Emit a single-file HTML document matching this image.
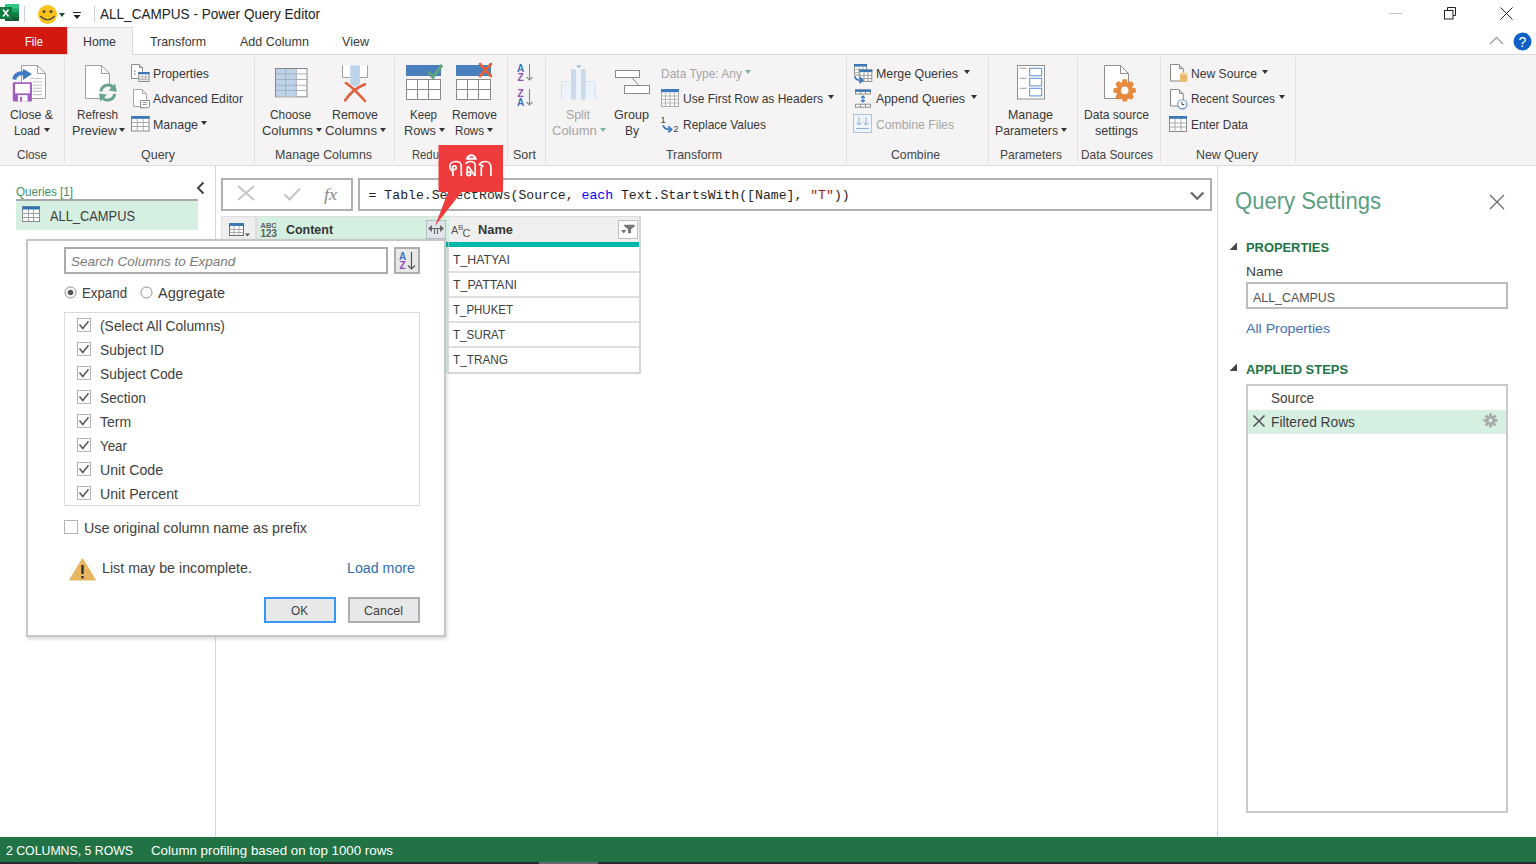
<!DOCTYPE html>
<html><head><meta charset="utf-8"><title>ALL_CAMPUS - Power Query Editor</title>
<style>
html,body{margin:0;padding:0;}
body{width:1536px;height:864px;position:relative;overflow:hidden;background:#fff;font-family:"Liberation Sans",sans-serif;}
.t{position:absolute;white-space:pre;transform-origin:0 0;}
.r{position:absolute;}
svg.r{overflow:visible;}
</style></head>
<body>
<div class="r" style="left:0px;top:0px;width:1536px;height:27px;background:#ffffff;"></div>
<div class="r" style="left:0px;top:27px;width:1536px;height:28px;background:#ffffff;"></div>
<div class="r" style="left:0px;top:54px;width:1536px;height:1px;background:#dadada;"></div>
<div class="r" style="left:0px;top:55px;width:1536px;height:110px;background:#f5f3f4;"></div>
<div class="r" style="left:0px;top:165px;width:1536px;height:1px;background:#dcdcdc;"></div>
<div class="r" style="left:0px;top:166px;width:1536px;height:671px;background:#ffffff;"></div>
<div class="r" style="left:0px;top:837px;width:1536px;height:25px;background:#217346;"></div>
<div class="r" style="left:0px;top:862px;width:1536px;height:2px;background:#2b2b2b;"></div>
<div class="r" style="left:539px;top:862px;width:59px;height:2px;background:#6a6a6a;"></div>
<svg class="r" style="left:0px;top:4px" width="20" height="18" viewBox="0 0 20 18"><rect x="5" y="0" width="14" height="17" fill="#21a366"/><rect x="5" y="0" width="14" height="4.5" fill="#33c481"/><rect x="5" y="8.5" width="14" height="4.5" fill="#107c41"/><rect x="5" y="13" width="14" height="4" fill="#185c37"/><rect x="0" y="3" width="12" height="12" fill="#107c41"/><path d="M3 5.5L8.5 12.5M8.5 5.5L3 12.5" stroke="#fff" stroke-width="1.6"/></svg>
<div class="r" style="left:24px;top:6px;width:1px;height:16px;background:#c8d0cc;"></div>
<svg class="r" style="left:37px;top:4px" width="21" height="21" viewBox="0 0 21 21"><circle cx="10.5" cy="10.5" r="9.5" fill="#fcc419"/><circle cx="7" cy="7.5" r="1.5" fill="#4b4b4b"/><circle cx="14" cy="7.5" r="1.5" fill="#4b4b4b"/><path d="M3.3 12 Q10.5 19.5 17.7 12" stroke="#4b4b4b" stroke-width="1.2" fill="none"/></svg>
<svg class="r" style="left:59px;top:13px" width="6" height="4" viewBox="0 0 6 4"><path d="M0 0H6L3 4Z" fill="#1f4d3a"/></svg>
<svg class="r" style="left:73px;top:12px" width="8" height="8" viewBox="0 0 8 8"><rect x="0" y="0" width="8" height="1" fill="#222"/><path d="M0.5 3H7.5L4 7Z" fill="#222"/></svg>
<div class="r" style="left:94px;top:6px;width:1px;height:16px;background:#c8d0cc;"></div>
<div class="t" style="left:100.00px;top:6.73px;font-size:14.5px;line-height:14.5px;color:#222;font-family:'Liberation Sans', sans-serif;transform:scaleX(0.9348);">ALL_CAMPUS - Power Query Editor</div>
<div class="r" style="left:1389px;top:13px;width:13px;height:1px;background:#c4c4c4;"></div>
<svg class="r" style="left:1444px;top:7px" width="13" height="13" viewBox="0 0 13 13"><rect x="0.5" y="3.5" width="8.5" height="8.5" fill="none" stroke="#222"/><path d="M3.5 3.5V0.5H11.5V8.5H9" fill="none" stroke="#222"/></svg>
<svg class="r" style="left:1500px;top:7px" width="13" height="13" viewBox="0 0 13 13"><path d="M0.5 0.5L12.5 12.5M12.5 0.5L0.5 12.5" stroke="#222" stroke-width="1"/></svg>
<div class="r" style="left:0px;top:27px;width:67px;height:27px;background:#d2190f;"></div>
<div class="t" style="left:25.00px;top:35.00px;font-size:13px;line-height:13px;color:#ffffff;font-family:'Liberation Sans', sans-serif;transform:scaleX(0.8600);">File</div>
<div class="r" style="left:67px;top:27px;width:66px;height:28px;background:#f5f3f4;border:1px solid #dadada;box-sizing:border-box;border-bottom:none;"></div>
<div class="t" style="left:83.00px;top:35.00px;font-size:13px;line-height:13px;color:#383838;font-family:'Liberation Sans', sans-serif;transform:scaleX(0.9507);">Home</div>
<div class="t" style="left:150.00px;top:35.00px;font-size:13px;line-height:13px;color:#383838;font-family:'Liberation Sans', sans-serif;transform:scaleX(0.9530);">Transform</div>
<div class="t" style="left:240.00px;top:35.00px;font-size:13px;line-height:13px;color:#383838;font-family:'Liberation Sans', sans-serif;transform:scaleX(0.9642);">Add Column</div>
<div class="t" style="left:342.00px;top:35.00px;font-size:13px;line-height:13px;color:#383838;font-family:'Liberation Sans', sans-serif;transform:scaleX(0.9660);">View</div>
<svg class="r" style="left:1489px;top:36px" width="15" height="9" viewBox="0 0 15 9"><path d="M1 8L7.5 1.5L14 8" fill="none" stroke="#a0a0a0" stroke-width="1.3"/></svg>
<svg class="r" style="left:1513px;top:32px" width="19" height="19" viewBox="0 0 19 19"><circle cx="9.5" cy="9.5" r="9" fill="#0f5fc6"/><text x="9.5" y="15" font-family="Liberation Sans" font-size="14" fill="#fff" text-anchor="middle">?</text></svg>
<div class="r" style="left:64px;top:57px;width:1px;height:105px;background:#e1dfdf;"></div>
<div class="r" style="left:254px;top:57px;width:1px;height:105px;background:#e1dfdf;"></div>
<div class="r" style="left:394px;top:57px;width:1px;height:105px;background:#e1dfdf;"></div>
<div class="r" style="left:507px;top:57px;width:1px;height:105px;background:#e1dfdf;"></div>
<div class="r" style="left:545px;top:57px;width:1px;height:105px;background:#e1dfdf;"></div>
<div class="r" style="left:846px;top:57px;width:1px;height:105px;background:#e1dfdf;"></div>
<div class="r" style="left:988px;top:57px;width:1px;height:105px;background:#e1dfdf;"></div>
<div class="r" style="left:1077px;top:57px;width:1px;height:105px;background:#e1dfdf;"></div>
<div class="r" style="left:1160px;top:57px;width:1px;height:105px;background:#e1dfdf;"></div>
<div class="r" style="left:1295px;top:57px;width:1px;height:105px;background:#e1dfdf;"></div>
<div class="t" style="left:17.00px;top:148.00px;font-size:13px;line-height:13px;color:#444444;font-family:'Liberation Sans', sans-serif;transform:scaleX(0.9032);">Close</div>
<div class="t" style="left:141.00px;top:148.00px;font-size:13px;line-height:13px;color:#444444;font-family:'Liberation Sans', sans-serif;transform:scaleX(0.9598);">Query</div>
<div class="t" style="left:275.00px;top:148.00px;font-size:13px;line-height:13px;color:#444444;font-family:'Liberation Sans', sans-serif;transform:scaleX(0.9517);">Manage Columns</div>
<div class="t" style="left:412.00px;top:148.00px;font-size:13px;line-height:13px;color:#444444;font-family:'Liberation Sans', sans-serif;transform:scaleX(0.8650);">Reduce Rows</div>
<div class="t" style="left:513.00px;top:148.00px;font-size:13px;line-height:13px;color:#444444;font-family:'Liberation Sans', sans-serif;transform:scaleX(0.9642);">Sort</div>
<div class="t" style="left:666.00px;top:148.00px;font-size:13px;line-height:13px;color:#444444;font-family:'Liberation Sans', sans-serif;transform:scaleX(0.9530);">Transform</div>
<div class="t" style="left:891.00px;top:148.00px;font-size:13px;line-height:13px;color:#444444;font-family:'Liberation Sans', sans-serif;transform:scaleX(0.9423);">Combine</div>
<div class="t" style="left:1000.00px;top:148.00px;font-size:13px;line-height:13px;color:#444444;font-family:'Liberation Sans', sans-serif;transform:scaleX(0.9225);">Parameters</div>
<div class="t" style="left:1081.00px;top:148.00px;font-size:13px;line-height:13px;color:#444444;font-family:'Liberation Sans', sans-serif;transform:scaleX(0.9139);">Data Sources</div>
<div class="t" style="left:1196.00px;top:148.00px;font-size:13px;line-height:13px;color:#444444;font-family:'Liberation Sans', sans-serif;transform:scaleX(0.9538);">New Query</div>
<svg class="r" style="left:8px;top:60px" width="44" height="44" viewBox="0 0 44 44"><path d="M13.5 5.5H29.5L37.5 13.5V38.5H13.5Z" fill="#fff" stroke="#a0a0a0"/><path d="M29.5 5.5V13.5H37.5" fill="none" stroke="#a0a0a0"/><path d="M22 18.5H34M25 22H34M25 25.2H34M25 28.3H34M25 31.4H34M25 34.6H34" stroke="#c4c4c4" stroke-width="1.1"/><path d="M6.3 19.5C6.8 15 10 13 15.3 13.2" fill="none" stroke="#3f7cc4" stroke-width="4"/><path d="M15 8.7L24 14L15 20Z" fill="#3f7cc4"/><rect x="4.8" y="22.2" width="19.1" height="19.3" rx="1" fill="#a05bbf"/><rect x="7.1" y="23.9" width="14.8" height="9.5" fill="#fff"/><rect x="9.9" y="35.1" width="9.7" height="6.4" fill="#fff"/><rect x="12.2" y="36.8" width="1.9" height="4.7" fill="#a05bbf"/></svg>
<div class="t" style="left:10.00px;top:108.00px;font-size:13px;line-height:13px;color:#383838;font-family:'Liberation Sans', sans-serif;transform:scaleX(0.9451);">Close &amp;</div>
<div class="t" style="left:14.00px;top:124.00px;font-size:13px;line-height:13px;color:#383838;font-family:'Liberation Sans', sans-serif;transform:scaleX(0.8989);">Load</div>
<svg class="r" style="left:44px;top:128px" width="6" height="4" viewBox="0 0 6 4"><path d="M0 0H6L3.0 4Z" fill="#333"/></svg>
<svg class="r" style="left:80px;top:60px" width="44" height="44" viewBox="0 0 44 44"><path d="M5.5 5.5H21.5L29.5 13.5V38.5H5.5Z" fill="#fff" stroke="#a0a0a0"/><path d="M21.5 5.5V13.5H29.5" fill="none" stroke="#a0a0a0"/><circle cx="27.8" cy="32.6" r="9.5" fill="#f5f3f4"/><path d="M21 31.5A7 7 0 0 1 33.5 27.8" fill="none" stroke="#66a58a" stroke-width="3"/><path d="M35 23.5L36.8 31.8L28.8 30.4Z" fill="#66a58a"/><path d="M34.6 33.8A7 7 0 0 1 22.3 37.6" fill="none" stroke="#66a58a" stroke-width="3"/><path d="M19.1 33.4L27 34.8L20.3 41.5Z" fill="#66a58a"/></svg>
<div class="t" style="left:77.00px;top:108.00px;font-size:13px;line-height:13px;color:#383838;font-family:'Liberation Sans', sans-serif;transform:scaleX(0.9011);">Refresh</div>
<div class="t" style="left:72.00px;top:124.00px;font-size:13px;line-height:13px;color:#383838;font-family:'Liberation Sans', sans-serif;transform:scaleX(0.9723);">Preview</div>
<svg class="r" style="left:119px;top:128px" width="6" height="4" viewBox="0 0 6 4"><path d="M0 0H6L3.0 4Z" fill="#333"/></svg>
<svg class="r" style="left:131px;top:64px" width="19" height="18" viewBox="0 0 19 18"><path d="M0.5 0.5H8L11.5 4V14.5H0.5Z" fill="#fff" stroke="#8a8a8a"/><path d="M8.5 0.5V3.5H11.5" fill="none" stroke="#8a8a8a"/><rect x="3" y="6.5" width="1.5" height="1.3" fill="#888"/><rect x="3" y="9.5" width="1.5" height="1.3" fill="#888"/><rect x="7.8" y="8.5" width="10.2" height="9" fill="#fff" stroke="#8a8a8a"/><rect x="7.3" y="8" width="11.2" height="2.3" fill="#3c78b5"/><path d="M7.8 13H18M7.8 15.3H18M11.3 10.3V17.5M14.6 10.3V17.5" stroke="#a8a8a8" stroke-width="0.9"/></svg>
<div class="t" style="left:153.00px;top:67.00px;font-size:13px;line-height:13px;color:#383838;font-family:'Liberation Sans', sans-serif;transform:scaleX(0.9447);">Properties</div>
<svg class="r" style="left:133px;top:89px" width="18" height="20" viewBox="0 0 18 20"><path d="M0.5 0.5H9L13.5 5V17.5H0.5Z" fill="#fff" stroke="#a8a8a8"/><path d="M9.5 0.5V4.5H13.5" fill="none" stroke="#a8a8a8"/><path d="M7.5 11.5H16.5V17.5C16.5 18.3 15.8 18.8 15 18.8H7.5Z" fill="#fff" stroke="#8a8a8a"/><path d="M9.5 13.5H14M9.5 15.5H14M7.5 18.5H12" stroke="#9a9a9a"/></svg>
<div class="t" style="left:153.00px;top:92.00px;font-size:13px;line-height:13px;color:#383838;font-family:'Liberation Sans', sans-serif;transform:scaleX(0.9432);">Advanced Editor</div>
<svg class="r" style="left:131px;top:116px" width="19" height="16" viewBox="0 0 19 16"><rect x="0.5" y="0.5" width="17.5" height="14.5" fill="#fff" stroke="#8a8a8a"/><rect x="0" y="0" width="18.5" height="2.8" fill="#3c78b5"/><path d="M0.5 6.5H18M0.5 10.5H18M6.3 2.8V15M12.2 2.8V15" stroke="#a8a8a8"/></svg>
<div class="t" style="left:153.00px;top:118.00px;font-size:13px;line-height:13px;color:#383838;font-family:'Liberation Sans', sans-serif;transform:scaleX(0.9575);">Manage</div>
<svg class="r" style="left:201px;top:121px" width="6" height="4" viewBox="0 0 6 4"><path d="M0 0H6L3.0 4Z" fill="#333"/></svg>
<svg class="r" style="left:275px;top:68px" width="33" height="30" viewBox="0 0 33 30"><rect x="0.5" y="0.5" width="31.5" height="28.3" fill="#fff" stroke="#858585"/><rect x="1" y="1" width="20.5" height="27.5" fill="#bdd3ea"/><path d="M1 5.9H31.5M1 11.5H31.5M1 17.3H31.5M1 22.5H31.5M10.7 1V28.5M21.3 1V28.5" stroke="#aab0b8"/></svg>
<div class="t" style="left:270.00px;top:108.00px;font-size:13px;line-height:13px;color:#383838;font-family:'Liberation Sans', sans-serif;transform:scaleX(0.9155);">Choose</div>
<div class="t" style="left:262.00px;top:124.00px;font-size:13px;line-height:13px;color:#383838;font-family:'Liberation Sans', sans-serif;transform:scaleX(0.9944);">Columns</div>
<svg class="r" style="left:316px;top:128px" width="6" height="4" viewBox="0 0 6 4"><path d="M0 0H6L3.0 4Z" fill="#333"/></svg>
<svg class="r" style="left:341px;top:65px" width="28" height="38" viewBox="0 0 28 38"><path d="M1.5 0.5V12.5H9M19 12.5H26.5V0.5" fill="none" stroke="#a0a0a0"/><rect x="2" y="0.5" width="7" height="11.5" fill="#fff"/><rect x="19" y="0.5" width="7" height="11.5" fill="#fff"/><path d="M9.3 0.5H18.9V19L14.1 22L9.3 19Z" fill="#bdd3ea"/><path d="M4.9 18.2C10 21 15 26 24 36" fill="none" stroke="#e0603c" stroke-width="2.6" stroke-linecap="round"/><path d="M24 19.3C17 22 9 28 4.2 35.3" fill="none" stroke="#e0603c" stroke-width="2.6" stroke-linecap="round"/></svg>
<div class="t" style="left:332.00px;top:108.00px;font-size:13px;line-height:13px;color:#383838;font-family:'Liberation Sans', sans-serif;transform:scaleX(0.9499);">Remove</div>
<div class="t" style="left:325.00px;top:124.00px;font-size:13px;line-height:13px;color:#383838;font-family:'Liberation Sans', sans-serif;transform:scaleX(1.0139);">Columns</div>
<svg class="r" style="left:380px;top:128px" width="6" height="4" viewBox="0 0 6 4"><path d="M0 0H6L3.0 4Z" fill="#333"/></svg>
<svg class="r" style="left:405px;top:63px" width="38" height="38" viewBox="0 0 38 38"><rect x="1" y="2" width="35" height="11" fill="#4a7fbd"/><rect x="1.5" y="16.5" width="34" height="20" fill="#fff" stroke="#8a8a8a"/><path d="M1.5 26.5H35.5M12.5 16.5V36.5M23.5 16.5V36.5" stroke="#8a8a8a"/><path d="M23 9 L28 14 L37 2" fill="none" stroke="#5ea07f" stroke-width="3.2"/></svg>
<div class="t" style="left:410.00px;top:108.00px;font-size:13px;line-height:13px;color:#383838;font-family:'Liberation Sans', sans-serif;transform:scaleX(0.8895);">Keep</div>
<div class="t" style="left:404.00px;top:124.00px;font-size:13px;line-height:13px;color:#383838;font-family:'Liberation Sans', sans-serif;transform:scaleX(0.9846);">Rows</div>
<svg class="r" style="left:439px;top:128px" width="6" height="4" viewBox="0 0 6 4"><path d="M0 0H6L3.0 4Z" fill="#333"/></svg>
<svg class="r" style="left:455px;top:63px" width="38" height="38" viewBox="0 0 38 38"><rect x="1" y="2" width="35" height="11" fill="#4a7fbd"/><rect x="1.5" y="16.5" width="34" height="20" fill="#fff" stroke="#8a8a8a"/><path d="M1.5 26.5H35.5M12.5 16.5V36.5M23.5 16.5V36.5" stroke="#8a8a8a"/><path d="M25 1 L36 13 M36 1 L25 13" stroke="#e0623a" stroke-width="2.8" stroke-linecap="round"/></svg>
<div class="t" style="left:452.00px;top:108.00px;font-size:13px;line-height:13px;color:#383838;font-family:'Liberation Sans', sans-serif;transform:scaleX(0.9293);">Remove</div>
<div class="t" style="left:455.00px;top:124.00px;font-size:13px;line-height:13px;color:#383838;font-family:'Liberation Sans', sans-serif;transform:scaleX(0.8923);">Rows</div>
<svg class="r" style="left:487px;top:128px" width="6" height="4" viewBox="0 0 6 4"><path d="M0 0H6L3.0 4Z" fill="#333"/></svg>
<svg class="r" style="left:517px;top:63px" width="17" height="20" viewBox="0 0 17 20"><text x="0" y="9" font-family="Liberation Sans" font-weight="700" font-size="10" fill="#3a73c0">A</text><text x="0.5" y="18" font-family="Liberation Sans" font-weight="700" font-size="10" fill="#8e4fb5">Z</text><path d="M12.5 1V17M9.5 14L12.5 17L15.5 14" fill="none" stroke="#8a8a8a" stroke-width="1.1"/></svg>
<svg class="r" style="left:517px;top:88px" width="17" height="20" viewBox="0 0 17 20"><text x="0.5" y="9" font-family="Liberation Sans" font-weight="700" font-size="10" fill="#8e4fb5">Z</text><text x="0" y="18" font-family="Liberation Sans" font-weight="700" font-size="10" fill="#3a73c0">A</text><path d="M12.5 1V17M9.5 14L12.5 17L15.5 14" fill="none" stroke="#8a8a8a" stroke-width="1.1"/></svg>
<svg class="r" style="left:560px;top:64px" width="37" height="37" viewBox="0 0 37 37"><path d="M1.8 35.5V17.9H11M25.7 17.9H35V35.5" fill="#ecf3fb" stroke="#c9d8ea"/><rect x="2" y="18" width="9" height="17.5" fill="#ecf3fb"/><rect x="25.7" y="18" width="9" height="17.5" fill="#ecf3fb"/><rect x="16" y="5" width="4.7" height="30.5" fill="#ecf3fb"/><rect x="11" y="5" width="5" height="30.5" fill="#cbd9ea"/><rect x="21" y="5" width="4.7" height="30.5" fill="#cbd9ea"/><path d="M16 1.5H21.5L18.75 4.3Z" fill="#9fb5cf"/></svg>
<div class="t" style="left:566.00px;top:108.00px;font-size:13px;line-height:13px;color:#a6a6a6;font-family:'Liberation Sans', sans-serif;transform:scaleX(0.9492);">Split</div>
<div class="t" style="left:552.00px;top:124.00px;font-size:13px;line-height:13px;color:#a6a6a6;font-family:'Liberation Sans', sans-serif;">Column</div>
<svg class="r" style="left:600px;top:128px" width="6" height="4" viewBox="0 0 6 4"><path d="M0 0H6L3.0 4Z" fill="#7fb59b"/></svg>
<svg class="r" style="left:615px;top:70px" width="36" height="26" viewBox="0 0 36 26"><rect x="0.5" y="0.5" width="24" height="7" fill="#fff" stroke="#8a8a8a"/><rect x="9.5" y="15.5" width="25" height="8" fill="#fff" stroke="#8a8a8a"/><path d="M17 7.5L24 15.5" stroke="#8a8a8a"/></svg>
<div class="t" style="left:614.00px;top:108.00px;font-size:13px;line-height:13px;color:#383838;font-family:'Liberation Sans', sans-serif;transform:scaleX(0.9685);">Group</div>
<div class="t" style="left:625.00px;top:124.00px;font-size:13px;line-height:13px;color:#383838;font-family:'Liberation Sans', sans-serif;transform:scaleX(0.9244);">By</div>
<div class="t" style="left:661.00px;top:67.00px;font-size:13px;line-height:13px;color:#a6a6a6;font-family:'Liberation Sans', sans-serif;transform:scaleX(0.9210);">Data Type: Any</div>
<svg class="r" style="left:745px;top:70px" width="6" height="4" viewBox="0 0 6 4"><path d="M0 0H6L3.0 4Z" fill="#7fb59b"/></svg>
<svg class="r" style="left:661px;top:89px" width="19" height="19" viewBox="0 0 19 19"><rect x="0.5" y="0.5" width="17" height="17" fill="#fff" stroke="#a8a8a8"/><rect x="0" y="0" width="18" height="3.2" fill="#3c7bc0"/><path d="M0.5 7H17.5M0.5 10.5H17.5M0.5 14H17.5M4.5 3.2V17.5M9 3.2V17.5M13.5 3.2V17.5" stroke="#b8b8b8" stroke-width="1.2"/></svg>
<div class="t" style="left:683.00px;top:92.00px;font-size:13px;line-height:13px;color:#383838;font-family:'Liberation Sans', sans-serif;transform:scaleX(0.9228);">Use First Row as Headers</div>
<svg class="r" style="left:828px;top:95px" width="6" height="4" viewBox="0 0 6 4"><path d="M0 0H6L3.0 4Z" fill="#333"/></svg>
<svg class="r" style="left:660px;top:114px" width="22" height="20" viewBox="0 0 22 20"><text x="0.6" y="8.8" font-family="Liberation Sans" font-size="9.5" fill="#444">1</text><text x="13.2" y="17.6" font-family="Liberation Sans" font-size="9.5" fill="#444">2</text><path d="M3.2 11.2C3.6 14.5 6 15.6 10.5 15.4" fill="none" stroke="#3a78c0" stroke-width="1.8"/><path d="M8.3 12.3L11.6 15.4L8.3 18.2" fill="none" stroke="#3a78c0" stroke-width="1.8"/></svg>
<div class="t" style="left:683.00px;top:118.00px;font-size:13px;line-height:13px;color:#383838;font-family:'Liberation Sans', sans-serif;transform:scaleX(0.9213);">Replace Values</div>
<svg class="r" style="left:853px;top:63px" width="21" height="21" viewBox="0 0 21 21"><rect x="1.5" y="1.5" width="12" height="10.5" fill="#fff" stroke="#8f8f8f"/><rect x="1" y="1" width="13" height="2.6" fill="#3c78b5"/><path d="M1.5 6.5H13.5M1.5 9.5H13.5M6 3.5V12M10 3.5V12" stroke="#b0b0b0"/><rect x="6.8" y="7" width="12" height="11.5" fill="#fff" stroke="#8f8f8f"/><rect x="6.3" y="6.5" width="13" height="2.6" fill="#3c78b5"/><path d="M6.8 12.5H18.8M6.8 15.5H18.8M11 9V18.5M15 9V18.5" stroke="#a0a0a0"/><path d="M1.8 13.3C2 16.8 4.5 17.4 8.5 17.2" fill="none" stroke="#3c78c0" stroke-width="1.8"/><path d="M6.5 14.2L9.6 17.2L6.5 20" fill="none" stroke="#3c78c0" stroke-width="1.8"/></svg>
<div class="t" style="left:876.00px;top:67.00px;font-size:13px;line-height:13px;color:#383838;font-family:'Liberation Sans', sans-serif;transform:scaleX(0.9535);">Merge Queries</div>
<svg class="r" style="left:964px;top:70px" width="6" height="4" viewBox="0 0 6 4"><path d="M0 0H6L3.0 4Z" fill="#333"/></svg>
<svg class="r" style="left:854px;top:89px" width="18" height="19" viewBox="0 0 18 19"><rect x="1.5" y="1" width="15" height="4" fill="#fff" stroke="#8f8f8f"/><rect x="1" y="0.5" width="16" height="2.4" fill="#3c78b5"/><path d="M6.5 3V5M11.5 3V5" stroke="#8f8f8f"/><path d="M8.9 7V13M7 8.8L8.9 7L10.8 8.8M7 11.2L8.9 13L10.8 11.2" fill="none" stroke="#3c78c0" stroke-width="1.2"/><rect x="1.5" y="15.2" width="15" height="3" fill="#fff" stroke="#8f8f8f"/><path d="M6.5 15.2V18.2M11.5 15.2V18.2" stroke="#8f8f8f"/></svg>
<div class="t" style="left:876.00px;top:92.00px;font-size:13px;line-height:13px;color:#383838;font-family:'Liberation Sans', sans-serif;transform:scaleX(0.9476);">Append Queries</div>
<svg class="r" style="left:971px;top:95px" width="6" height="4" viewBox="0 0 6 4"><path d="M0 0H6L3.0 4Z" fill="#333"/></svg>
<svg class="r" style="left:853px;top:114px" width="20" height="20" viewBox="0 0 20 20"><rect x="0.5" y="0.5" width="18" height="18" fill="#eef4fb" stroke="#a9c3e0"/><path d="M6 3V11M3.5 8.5L6 11L8.5 8.5M13 3V11M10.5 8.5L13 11L15.5 8.5M3 14.5H16" fill="none" stroke="#8fb0d6"/></svg>
<div class="t" style="left:876.00px;top:118.00px;font-size:13px;line-height:13px;color:#a6a6a6;font-family:'Liberation Sans', sans-serif;transform:scaleX(0.9390);">Combine Files</div>
<svg class="r" style="left:1017px;top:65px" width="29" height="36" viewBox="0 0 29 36"><rect x="0.5" y="0.5" width="27" height="33.5" fill="#fff" stroke="#8f8f8f"/><path d="M2.5 3.3H9.5M2.5 13.3H9.5M2.5 23.3H9.5" stroke="#a0a0a0"/><rect x="12.7" y="3.3" width="12" height="7.5" fill="#fff" stroke="#5a8fcf"/><rect x="12.7" y="13.3" width="12" height="7.6" fill="#fff" stroke="#5a8fcf"/><rect x="12.7" y="23.3" width="12" height="7.6" fill="#fff" stroke="#5a8fcf"/></svg>
<div class="t" style="left:1008.00px;top:108.00px;font-size:13px;line-height:13px;color:#383838;font-family:'Liberation Sans', sans-serif;transform:scaleX(0.9575);">Manage</div>
<div class="t" style="left:995.00px;top:124.00px;font-size:13px;line-height:13px;color:#383838;font-family:'Liberation Sans', sans-serif;transform:scaleX(0.9374);">Parameters</div>
<svg class="r" style="left:1061px;top:128px" width="6" height="4" viewBox="0 0 6 4"><path d="M0 0H6L3.0 4Z" fill="#333"/></svg>
<svg class="r" style="left:1103px;top:64px" width="35" height="38" viewBox="0 0 35 38"><path d="M1.5 1.5H17.5L25.5 9.5V34.5H1.5Z" fill="#fff" stroke="#8f8f8f"/><path d="M17.5 1.5V9.5H25.5" fill="none" stroke="#8f8f8f"/><g transform="translate(21.7 26.4)"><circle r="8" fill="#e8893c"/><path d="M6.50 -3.20L11.20 -2.00L11.20 2.00L6.50 3.20Z" fill="#e8893c"/><path d="M6.86 2.33L9.33 6.51L6.51 9.33L2.33 6.86Z" fill="#e8893c"/><path d="M3.20 6.50L2.00 11.20L-2.00 11.20L-3.20 6.50Z" fill="#e8893c"/><path d="M-2.33 6.86L-6.51 9.33L-9.33 6.51L-6.86 2.33Z" fill="#e8893c"/><path d="M-6.50 3.20L-11.20 2.00L-11.20 -2.00L-6.50 -3.20Z" fill="#e8893c"/><path d="M-6.86 -2.33L-9.33 -6.51L-6.51 -9.33L-2.33 -6.86Z" fill="#e8893c"/><path d="M-3.20 -6.50L-2.00 -11.20L2.00 -11.20L3.20 -6.50Z" fill="#e8893c"/><path d="M2.33 -6.86L6.51 -9.33L9.33 -6.51L6.86 -2.33Z" fill="#e8893c"/><circle r="3.8" fill="#fff"/></g></svg>
<div class="t" style="left:1084.00px;top:108.00px;font-size:13px;line-height:13px;color:#383838;font-family:'Liberation Sans', sans-serif;transform:scaleX(0.9276);">Data source</div>
<div class="t" style="left:1095.00px;top:124.00px;font-size:13px;line-height:13px;color:#383838;font-family:'Liberation Sans', sans-serif;transform:scaleX(0.9601);">settings</div>
<svg class="r" style="left:1170px;top:64px" width="19" height="19" viewBox="0 0 19 19"><path d="M0.5 0.5H8.5L13.3 5V17H0.5Z" fill="#fff" stroke="#8a8a8a"/><path d="M9.5 0.5V4.5H13.3" fill="none" stroke="#8a8a8a"/><rect x="10" y="9.5" width="7.3" height="8.3" rx="1" fill="#e8b86a"/><ellipse cx="13.65" cy="9.8" rx="3.65" ry="1.3" fill="#f3d49c"/></svg>
<div class="t" style="left:1191.00px;top:67.00px;font-size:13px;line-height:13px;color:#383838;font-family:'Liberation Sans', sans-serif;transform:scaleX(0.9324);">New Source</div>
<svg class="r" style="left:1262px;top:70px" width="6" height="4" viewBox="0 0 6 4"><path d="M0 0H6L3.0 4Z" fill="#333"/></svg>
<svg class="r" style="left:1170px;top:89px" width="19" height="20" viewBox="0 0 19 20"><path d="M0.5 0.5H8.5L13.3 5V17H0.5Z" fill="#fff" stroke="#8a8a8a"/><path d="M9.5 0.5V4.5H13.3" fill="none" stroke="#8a8a8a"/><circle cx="12.3" cy="15.3" r="4.6" fill="#fff" stroke="#5a8fcf" stroke-width="1.1"/><path d="M12 12.8V15.6H14.3" fill="none" stroke="#444" stroke-width="1"/></svg>
<div class="t" style="left:1191.00px;top:92.00px;font-size:13px;line-height:13px;color:#383838;font-family:'Liberation Sans', sans-serif;transform:scaleX(0.9082);">Recent Sources</div>
<svg class="r" style="left:1279px;top:95px" width="6" height="4" viewBox="0 0 6 4"><path d="M0 0H6L3.0 4Z" fill="#333"/></svg>
<svg class="r" style="left:1169px;top:116px" width="18" height="16" viewBox="0 0 18 16"><rect x="0.5" y="0.5" width="17" height="15" fill="#fff" stroke="#8a8a8a"/><rect x="0" y="0" width="18" height="2.8" fill="#3c78b5"/><path d="M0.5 7H17.5M0.5 11H17.5M6 2.8V15.5M12 2.8V15.5" stroke="#a8a8a8"/></svg>
<div class="t" style="left:1191.00px;top:118.00px;font-size:13px;line-height:13px;color:#383838;font-family:'Liberation Sans', sans-serif;transform:scaleX(0.9163);">Enter Data</div>
<div class="t" style="left:16.00px;top:186.42px;font-size:12.5px;line-height:12.5px;color:#3f8f67;font-family:'Liberation Sans', sans-serif;transform:scaleX(0.9325);">Queries [1]</div>
<svg class="r" style="left:195px;top:181px" width="11" height="14" viewBox="0 0 11 14"><path d="M8.5 1.5L3 7L8.5 12.5" fill="none" stroke="#444" stroke-width="2"/></svg>
<div class="r" style="left:16px;top:199px;width:182px;height:2px;background:#a8a8a8;"></div>
<div class="r" style="left:16px;top:201px;width:182px;height:29px;background:#d5efe0;"></div>
<svg class="r" style="left:22px;top:206px" width="18" height="16" viewBox="0 0 18 16"><rect x="0.5" y="0.5" width="17" height="15" fill="#fff" stroke="#8a8a8a"/><rect x="0.5" y="0.5" width="17" height="3" fill="#2e75b6"/><path d="M0.5 7.5H17.5M0.5 11.5H17.5M6.5 3.5V15.5M11.5 3.5V15.5" stroke="#a0a0a0"/></svg>
<div class="t" style="left:50.00px;top:209.15px;font-size:14px;line-height:14px;color:#404040;font-family:'Liberation Sans', sans-serif;transform:scaleX(0.9178);">ALL_CAMPUS</div>
<div class="r" style="left:215px;top:166px;width:1px;height:671px;background:#d6d6d6;"></div>
<div class="r" style="left:221px;top:178px;width:132px;height:33px;background:#fff;border:2px solid #b0b0b0;box-sizing:border-box;"></div>
<svg class="r" style="left:236px;top:185px" width="20" height="16" viewBox="0 0 20 16"><path d="M2 1L18 15M18 1L2 15" stroke="#c6c6c6" stroke-width="2"/></svg>
<svg class="r" style="left:283px;top:187px" width="19" height="14" viewBox="0 0 19 14"><path d="M1.5 7.5L6.5 12.5L17 1.5" fill="none" stroke="#c6c6c6" stroke-width="2.2"/></svg>
<div class="t" style="left:324.00px;top:186.60px;font-size:16px;line-height:16px;color:#8a8a8a;font-family:'Liberation Serif', serif;font-style:italic;transform:scaleX(1.1285);">fx</div>
<div class="r" style="left:358px;top:178px;width:854px;height:33px;background:#fff;border:2px solid #b0b0b0;box-sizing:border-box;"></div>
<div class="t" style="left:368.60px;top:188.92px;font-size:13.15px;line-height:13.15px;font-family:'Liberation Mono', monospace;"><span style="color:#1e1e1e">= Table.SelectRows(Source, </span><span style="color:#0000ff">each</span><span style="color:#1e1e1e"> Text.StartsWith([Name], </span><span style="color:#a31515">&quot;T&quot;</span><span style="color:#1e1e1e">))</span></div>
<svg class="r" style="left:1189px;top:191px" width="16" height="10" viewBox="0 0 16 10"><path d="M2 1.5L8.2 7.8L14.5 1.5" fill="none" stroke="#666" stroke-width="2.2"/></svg>
<div class="r" style="left:221px;top:216px;width:420px;height:26px;background:#dedede;"></div>
<div class="r" style="left:222px;top:217px;width:33px;height:25px;background:#efefef;"></div>
<svg class="r" style="left:229px;top:223px" width="22" height="14" viewBox="0 0 22 14"><rect x="0.5" y="0.5" width="14" height="12" fill="#fff" stroke="#666"/><rect x="0" y="0" width="15" height="3" fill="#3c78b5"/><path d="M0.5 6.5H14.5M0.5 9.5H14.5M5 3V12.5M10 3V12.5" stroke="#aaa"/><path d="M16 10.5H21L18.5 13.5Z" fill="#555"/></svg>
<div class="r" style="left:257px;top:217px;width:192px;height:25px;background:#d5efe0;"></div>
<svg class="r" style="left:260px;top:221px" width="20" height="18" viewBox="0 0 20 18"><text x="0.6" y="7.3" font-family="Liberation Sans" font-weight="700" font-size="7.4" fill="#606060" textLength="16" lengthAdjust="spacingAndGlyphs">ABC</text><text x="0.5" y="16" font-family="Liberation Sans" font-weight="700" font-size="10" fill="#606060" textLength="16.5" lengthAdjust="spacingAndGlyphs">123</text></svg>
<div class="t" style="left:286.00px;top:223.00px;font-size:13px;line-height:13px;color:#363636;font-family:'Liberation Sans', sans-serif;font-weight:700;transform:scaleX(0.9577);">Content</div>
<div class="r" style="left:426px;top:220px;width:20px;height:19px;background:#dfe3ea;border:1px solid #b8bcc4;box-sizing:border-box;"></div>
<svg class="r" style="left:427px;top:223px" width="18" height="13" viewBox="0 0 18 13"><path d="M1 5.5L5 2V9Z M17 5.5L13 2V9Z" fill="#666"/><path d="M5 5.5H13M7.5 5V11M10.5 5V11" stroke="#666" stroke-width="1.1"/></svg>
<div class="r" style="left:449px;top:217px;width:190px;height:25px;background:#efefef;"></div>
<svg class="r" style="left:451px;top:222px" width="20" height="16" viewBox="0 0 20 16"><text x="0" y="12" font-family="Liberation Sans" font-size="11" fill="#555">A</text><text x="7" y="8" font-family="Liberation Sans" font-size="8" fill="#555">B</text><text x="11.5" y="15" font-family="Liberation Sans" font-size="11" fill="#555">C</text></svg>
<div class="t" style="left:478.00px;top:223.00px;font-size:13px;line-height:13px;color:#363636;font-family:'Liberation Sans', sans-serif;font-weight:700;transform:scaleX(0.9880);">Name</div>
<div class="r" style="left:618px;top:220px;width:20px;height:19px;background:#fff;border:1px solid #bfbfbf;box-sizing:border-box;"></div>
<svg class="r" style="left:618px;top:220px" width="20" height="19" viewBox="0 0 20 19"><path d="M6.2 4.8H16.8V6.2L13.1 9.2V13.2H10V9.2L6.2 6.2Z" fill="#777"/><path d="M3 10H8.4L5.7 13.6Z" fill="#777"/></svg>
<div class="r" style="left:445px;top:242px;width:196px;height:5px;background:#01b8aa;"></div>
<div class="r" style="left:448px;top:242px;width:1px;height:5px;background:#7fd6cf;"></div>
<div class="r" style="left:445px;top:247px;width:3px;height:126px;background:#d5efe0;"></div>
<div class="r" style="left:448px;top:247px;width:1px;height:126px;background:#e3e3e3;"></div>
<div class="r" style="left:449px;top:271px;width:190px;height:2px;background:#dedede;"></div>
<div class="r" style="left:449px;top:296px;width:190px;height:2px;background:#dedede;"></div>
<div class="r" style="left:449px;top:321px;width:190px;height:2px;background:#dedede;"></div>
<div class="r" style="left:449px;top:346px;width:190px;height:2px;background:#dedede;"></div>
<div class="r" style="left:639px;top:216px;width:2px;height:158px;background:#d6d6d6;"></div>
<div class="r" style="left:448px;top:372px;width:193px;height:2px;background:#d6d6d6;"></div>
<div class="r" style="left:26px;top:239px;width:420px;height:398px;background:#fff;border:2px solid #c6c6c6;box-sizing:border-box;box-shadow:1px 2px 4px rgba(0,0,0,0.16);"></div>
<div class="r" style="left:1217px;top:166px;width:1px;height:671px;background:#d6d6d6;"></div>
<div class="t" style="left:1235.00px;top:189.53px;font-size:23px;line-height:23px;color:#5a9f82;font-family:'Liberation Sans', sans-serif;transform:scaleX(0.9596);">Query Settings</div>
<svg class="r" style="left:1489px;top:194px" width="16" height="16" viewBox="0 0 16 16"><path d="M1 1L15 15M15 1L1 15" stroke="#666" stroke-width="1.2"/></svg>
<div class="t" style="left:453.00px;top:253.00px;font-size:13px;line-height:13px;color:#404040;font-family:'Liberation Sans', sans-serif;transform:scaleX(0.9470);">T_HATYAI</div>
<div class="t" style="left:453.00px;top:278.00px;font-size:13px;line-height:13px;color:#404040;font-family:'Liberation Sans', sans-serif;transform:scaleX(0.9532);">T_PATTANI</div>
<div class="t" style="left:453.00px;top:303.00px;font-size:13px;line-height:13px;color:#404040;font-family:'Liberation Sans', sans-serif;transform:scaleX(0.8833);">T_PHUKET</div>
<div class="t" style="left:453.00px;top:328.00px;font-size:13px;line-height:13px;color:#404040;font-family:'Liberation Sans', sans-serif;transform:scaleX(0.8929);">T_SURAT</div>
<div class="t" style="left:453.00px;top:353.00px;font-size:13px;line-height:13px;color:#404040;font-family:'Liberation Sans', sans-serif;transform:scaleX(0.9069);">T_TRANG</div>
<div class="r" style="left:64px;top:247px;width:324px;height:27px;background:#fff;border:2px solid #ababab;box-sizing:border-box;"></div>
<div class="t" style="left:71.00px;top:254.57px;font-size:13.5px;line-height:13.5px;color:#7a7a7a;font-family:'Liberation Sans', sans-serif;font-style:italic;">Search Columns to Expand</div>
<div class="r" style="left:394px;top:247px;width:26px;height:27px;background:#e9e9e9;border:2px solid #adadad;box-sizing:border-box;"></div>
<svg class="r" style="left:398px;top:250px" width="19" height="21" viewBox="0 0 19 21"><text x="1" y="10" font-family="Liberation Sans" font-weight="700" font-size="10" fill="#3a73c0">A</text><text x="1.5" y="19" font-family="Liberation Sans" font-weight="700" font-size="10" fill="#8e4fb5">Z</text><path d="M13.5 2V19M10 15.5L13.5 19L17 15.5" fill="none" stroke="#555" stroke-width="1.2"/></svg>
<svg class="r" style="left:64px;top:286px" width="14" height="14" viewBox="0 0 14 14"><circle cx="6.5" cy="6.5" r="5.5" fill="#fff" stroke="#8a8a8a"/><circle cx="6.5" cy="6.5" r="2.8" fill="#555"/></svg>
<div class="t" style="left:82.00px;top:286.15px;font-size:14px;line-height:14px;color:#404040;font-family:'Liberation Sans', sans-serif;transform:scaleX(0.9482);">Expand</div>
<svg class="r" style="left:140px;top:286px" width="14" height="14" viewBox="0 0 14 14"><circle cx="6.5" cy="6.5" r="5.5" fill="#fff" stroke="#8a8a8a"/></svg>
<div class="t" style="left:158.00px;top:286.15px;font-size:14px;line-height:14px;color:#404040;font-family:'Liberation Sans', sans-serif;transform:scaleX(1.0370);">Aggregate</div>
<div class="r" style="left:64px;top:312px;width:356px;height:194px;background:#fff;border:1px solid #d6dbe0;box-sizing:border-box;"></div>
<svg class="r" style="left:77px;top:318px" width="15" height="15" viewBox="0 0 15 15"><rect x="0.5" y="0.5" width="13" height="13" fill="#fff" stroke="#b3b3b3"/><path d="M2.5 6.5L5.8 10.5L11.5 3.3" fill="none" stroke="#555" stroke-width="1.5"/></svg>
<div class="t" style="left:100.00px;top:319.15px;font-size:14px;line-height:14px;color:#404040;font-family:'Liberation Sans', sans-serif;transform:scaleX(0.9915);">(Select All Columns)</div>
<svg class="r" style="left:77px;top:342px" width="15" height="15" viewBox="0 0 15 15"><rect x="0.5" y="0.5" width="13" height="13" fill="#fff" stroke="#b3b3b3"/><path d="M2.5 6.5L5.8 10.5L11.5 3.3" fill="none" stroke="#555" stroke-width="1.5"/></svg>
<div class="t" style="left:100.00px;top:343.15px;font-size:14px;line-height:14px;color:#404040;font-family:'Liberation Sans', sans-serif;transform:scaleX(0.9906);">Subject ID</div>
<svg class="r" style="left:77px;top:366px" width="15" height="15" viewBox="0 0 15 15"><rect x="0.5" y="0.5" width="13" height="13" fill="#fff" stroke="#b3b3b3"/><path d="M2.5 6.5L5.8 10.5L11.5 3.3" fill="none" stroke="#555" stroke-width="1.5"/></svg>
<div class="t" style="left:100.00px;top:367.15px;font-size:14px;line-height:14px;color:#404040;font-family:'Liberation Sans', sans-serif;transform:scaleX(0.9873);">Subject Code</div>
<svg class="r" style="left:77px;top:390px" width="15" height="15" viewBox="0 0 15 15"><rect x="0.5" y="0.5" width="13" height="13" fill="#fff" stroke="#b3b3b3"/><path d="M2.5 6.5L5.8 10.5L11.5 3.3" fill="none" stroke="#555" stroke-width="1.5"/></svg>
<div class="t" style="left:100.00px;top:391.15px;font-size:14px;line-height:14px;color:#404040;font-family:'Liberation Sans', sans-serif;transform:scaleX(0.9852);">Section</div>
<svg class="r" style="left:77px;top:414px" width="15" height="15" viewBox="0 0 15 15"><rect x="0.5" y="0.5" width="13" height="13" fill="#fff" stroke="#b3b3b3"/><path d="M2.5 6.5L5.8 10.5L11.5 3.3" fill="none" stroke="#555" stroke-width="1.5"/></svg>
<div class="t" style="left:100.00px;top:415.15px;font-size:14px;line-height:14px;color:#404040;font-family:'Liberation Sans', sans-serif;">Term</div>
<svg class="r" style="left:77px;top:438px" width="15" height="15" viewBox="0 0 15 15"><rect x="0.5" y="0.5" width="13" height="13" fill="#fff" stroke="#b3b3b3"/><path d="M2.5 6.5L5.8 10.5L11.5 3.3" fill="none" stroke="#555" stroke-width="1.5"/></svg>
<div class="t" style="left:100.00px;top:439.15px;font-size:14px;line-height:14px;color:#404040;font-family:'Liberation Sans', sans-serif;transform:scaleX(0.9547);">Year</div>
<svg class="r" style="left:77px;top:462px" width="15" height="15" viewBox="0 0 15 15"><rect x="0.5" y="0.5" width="13" height="13" fill="#fff" stroke="#b3b3b3"/><path d="M2.5 6.5L5.8 10.5L11.5 3.3" fill="none" stroke="#555" stroke-width="1.5"/></svg>
<div class="t" style="left:100.00px;top:463.15px;font-size:14px;line-height:14px;color:#404040;font-family:'Liberation Sans', sans-serif;transform:scaleX(1.0124);">Unit Code</div>
<svg class="r" style="left:77px;top:486px" width="15" height="15" viewBox="0 0 15 15"><rect x="0.5" y="0.5" width="13" height="13" fill="#fff" stroke="#b3b3b3"/><path d="M2.5 6.5L5.8 10.5L11.5 3.3" fill="none" stroke="#555" stroke-width="1.5"/></svg>
<div class="t" style="left:100.00px;top:487.15px;font-size:14px;line-height:14px;color:#404040;font-family:'Liberation Sans', sans-serif;transform:scaleX(1.0121);">Unit Percent</div>
<svg class="r" style="left:64px;top:520px" width="15" height="15" viewBox="0 0 15 15"><rect x="0.5" y="0.5" width="13" height="13" fill="#fff" stroke="#b3b3b3"/></svg>
<div class="t" style="left:84.00px;top:521.15px;font-size:14px;line-height:14px;color:#404040;font-family:'Liberation Sans', sans-serif;transform:scaleX(1.0198);">Use original column name as prefix</div>
<svg class="r" style="left:69px;top:557px" width="28" height="24" viewBox="0 0 28 24"><path d="M13.5 1.5L26.5 23H0.5Z" fill="#e8b660" stroke="#e8b660" stroke-linejoin="round"/><rect x="12.3" y="8" width="2.4" height="9" fill="#333"/><rect x="12.3" y="19" width="2.4" height="2.4" fill="#333"/></svg>
<div class="t" style="left:102.00px;top:561.15px;font-size:14px;line-height:14px;color:#404040;font-family:'Liberation Sans', sans-serif;transform:scaleX(1.0199);">List may be incomplete.</div>
<div class="t" style="left:347.00px;top:561.15px;font-size:14px;line-height:14px;color:#2f6db3;font-family:'Liberation Sans', sans-serif;transform:scaleX(1.0161);">Load more</div>
<div class="r" style="left:264px;top:597px;width:72px;height:26px;background:#e8e8e8;border:2px solid #3897f5;box-sizing:border-box;"></div>
<div class="t" style="left:291.00px;top:604.00px;font-size:13px;line-height:13px;color:#404040;font-family:'Liberation Sans', sans-serif;transform:scaleX(0.9050);">OK</div>
<div class="r" style="left:348px;top:597px;width:72px;height:26px;background:#e8e8e8;border:2px solid #adadad;box-sizing:border-box;"></div>
<div class="t" style="left:364.00px;top:604.00px;font-size:13px;line-height:13px;color:#404040;font-family:'Liberation Sans', sans-serif;transform:scaleX(0.9631);">Cancel</div>
<svg class="r" style="left:1229px;top:242px" width="9" height="9" viewBox="0 0 9 9"><path d="M8 0.5V8H0.5Z" fill="#444"/></svg>
<div class="t" style="left:1246.00px;top:240.57px;font-size:13.5px;line-height:13.5px;color:#217346;font-family:'Liberation Sans', sans-serif;font-weight:700;transform:scaleX(0.9539);">PROPERTIES</div>
<div class="t" style="left:1246.00px;top:264.57px;font-size:13.5px;line-height:13.5px;color:#404040;font-family:'Liberation Sans', sans-serif;transform:scaleX(1.0265);">Name</div>
<div class="r" style="left:1246px;top:282px;width:262px;height:27px;background:#fff;border:2px solid #bcbcbc;box-sizing:border-box;"></div>
<div class="t" style="left:1253.00px;top:290.57px;font-size:13.5px;line-height:13.5px;color:#505050;font-family:'Liberation Sans', sans-serif;transform:scaleX(0.9182);">ALL_CAMPUS</div>
<div class="t" style="left:1246.00px;top:321.57px;font-size:13.5px;line-height:13.5px;color:#3f6fb5;font-family:'Liberation Sans', sans-serif;transform:scaleX(1.0466);">All Properties</div>
<svg class="r" style="left:1229px;top:363px" width="9" height="9" viewBox="0 0 9 9"><path d="M8 0.5V8H0.5Z" fill="#444"/></svg>
<div class="t" style="left:1246.00px;top:362.57px;font-size:13.5px;line-height:13.5px;color:#217346;font-family:'Liberation Sans', sans-serif;font-weight:700;transform:scaleX(0.9576);">APPLIED STEPS</div>
<div class="r" style="left:1246px;top:384px;width:262px;height:429px;background:#fff;border:2px solid #cacaca;box-sizing:border-box;"></div>
<div class="t" style="left:1271.00px;top:391.15px;font-size:14px;line-height:14px;color:#404040;font-family:'Liberation Sans', sans-serif;transform:scaleX(0.9689);">Source</div>
<div class="r" style="left:1248px;top:410px;width:258px;height:24px;background:#d5efe0;"></div>
<svg class="r" style="left:1252px;top:414px" width="14" height="14" viewBox="0 0 14 14"><path d="M1.5 1.5L12.5 12.5M12.5 1.5L1.5 12.5" stroke="#555" stroke-width="1.6"/></svg>
<div class="t" style="left:1271.00px;top:415.15px;font-size:14px;line-height:14px;color:#404040;font-family:'Liberation Sans', sans-serif;transform:scaleX(0.9812);">Filtered Rows</div>
<svg class="r" style="left:1483px;top:413px" width="16" height="16" viewBox="0 0 16 16"><g transform="translate(7.5 7.5)"><circle r="4.6" fill="#aaa"/><rect x="-1.4" y="-7" width="2.8" height="3.5" fill="#aaa" transform="rotate(0)"/><rect x="-1.4" y="-7" width="2.8" height="3.5" fill="#aaa" transform="rotate(45)"/><rect x="-1.4" y="-7" width="2.8" height="3.5" fill="#aaa" transform="rotate(90)"/><rect x="-1.4" y="-7" width="2.8" height="3.5" fill="#aaa" transform="rotate(135)"/><rect x="-1.4" y="-7" width="2.8" height="3.5" fill="#aaa" transform="rotate(180)"/><rect x="-1.4" y="-7" width="2.8" height="3.5" fill="#aaa" transform="rotate(225)"/><rect x="-1.4" y="-7" width="2.8" height="3.5" fill="#aaa" transform="rotate(270)"/><rect x="-1.4" y="-7" width="2.8" height="3.5" fill="#aaa" transform="rotate(315)"/><circle r="2" fill="#d5efe0"/></g></svg>
<div class="t" style="left:6.00px;top:843.57px;font-size:13.5px;line-height:13.5px;color:#ffffff;font-family:'Liberation Sans', sans-serif;transform:scaleX(0.9102);">2 COLUMNS, 5 ROWS</div>
<div class="t" style="left:151.00px;top:843.57px;font-size:13.5px;line-height:13.5px;color:#ffffff;font-family:'Liberation Sans', sans-serif;transform:scaleX(0.9860);">Column profiling based on top 1000 rows</div>
<svg class="r" style="left:434px;top:144px" width="70" height="83" viewBox="0 0 70 83"><path d="M4.5 1H69V48H27.5L1 82L14 48H4.5Z" fill="#ef3b3b"/><g transform="translate(-434 -144) translate(440 145)" fill="none" stroke="#fff" stroke-width="1.7" stroke-linecap="butt"><path d="M21.3 31V20.8C21.3 18.3 19 16.5 15.7 16.5C12.3 16.5 9.8 18.6 9.8 21.5C9.8 23.6 11.2 25.2 12.3 26.3"/><path d="M12.9 31V25.3"/><circle cx="14.3" cy="22.8" r="1.9"/><path d="M35.2 31V20.5C35.2 18 33 16.5 30.3 16.5C28.2 16.5 26.6 17.5 25.8 18.9"/><path d="M27.2 27.5V22.7C27.2 21.8 28.2 21.3 28.8 22.1L34.8 30.8"/><circle cx="28.8" cy="28.8" r="1.9"/><path d="M26 14.4H36.5C36.1 11.6 34 9.6 31.25 9.6C28.5 9.6 26.4 11.6 26 14.4Z" fill="#fff" stroke-width="0.6"/><path d="M28.9 12.7H34C33.5 11.8 32.5 11.2 31.45 11.2C30.4 11.2 29.4 11.8 28.9 12.7Z" fill="#ef3b3b" stroke="none"/><path d="M50.9 31V22.5C50.9 19 48.5 16.5 45.3 16.5C42.5 16.5 40.3 17.7 39.5 19.6L43.6 21.2"/><path d="M41.3 31V22.6C41.3 21.8 42 21.3 43 21.2"/></g></svg>
</body></html>
